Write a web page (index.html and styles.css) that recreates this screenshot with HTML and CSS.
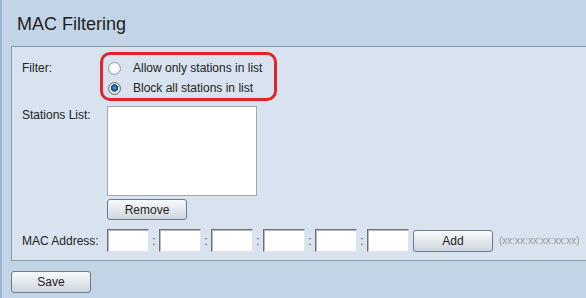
FILE: index.html
```html
<!DOCTYPE html>
<html lang="en">
<head>
  <meta charset="UTF-8">
  <title>MAC Filtering</title>
  <link rel="stylesheet" href="styles.css">
</head>
<body>

  <!-- Page Title -->
  <header class="page-header">
    <h1>MAC Filtering</h1>
  </header>

  <!-- Settings Panel -->
  <section class="panel">
    <div class="row">
      <label class="field-label filter-label">Filter:</label>
      <div class="filter-group">
        <label class="radio-row">
          <input type="radio" name="filter"> Allow only stations in list
        </label>
        <label class="radio-row">
          <input type="radio" name="filter" checked> Block all stations in list
        </label>
      </div>
    </div>

    <div class="row stations-row">
      <label class="field-label">Stations List:</label>
      <div class="stations">
        <div class="listbox"></div>
        <button class="btn remove-button">Remove</button>
      </div>
    </div>

    <div class="row mac-row">
      <label class="field-label">MAC Address:</label>
      <div class="mac-fields">
        <input type="text" class="mac-input">
        <span class="colon">:</span>
        <input type="text" class="mac-input">
        <span class="colon">:</span>
        <input type="text" class="mac-input">
        <span class="colon">:</span>
        <input type="text" class="mac-input">
        <span class="colon">:</span>
        <input type="text" class="mac-input">
        <span class="colon">:</span>
        <input type="text" class="mac-input">
      </div>
      <button class="btn add-button">Add</button>
      <span class="hint">(xx:xx:xx:xx:xx:xx)</span>
    </div>
  </section>

  <footer class="page-footer">
    <button class="btn save-button">Save</button>
  </footer>

</body>
</html>
```

FILE: styles.css
```css
  /* Global Styles */
  * {
    margin: 0;
    padding: 0;
    box-sizing: border-box;
    font-family: 'Liberation Sans', Arial, sans-serif;
  }

  body {
    height: 100vh;
    overflow: hidden;
    font-size: 12px;
    color: #222;
    background-color: #c2d4e6;
    border-left: 2px solid #97b4d6;
  }

  /* Header */
  .page-header {
    height: 46px;
    padding: 14px 0 0 15px;
  }

  .page-header h1 {
    font-size: 18px;
    font-weight: normal;
    line-height: 21px;
    color: #1e1e1e;
  }

  /* Panel */
  .panel {
    margin-left: 9px;
    padding: 5px 0 8px 10px;
    background-color: #d8e3ef;
    border: 1px solid #8b9cae;
    border-right: none;
  }

  .row {
    display: flex;
    align-items: flex-start;
  }

  .field-label {
    width: 85px;
    flex-shrink: 0;
    line-height: 14px;
  }

  .filter-label {
    padding-top: 9px;
  }

  /* Radio group with highlight */
  .filter-group {
    margin-left: -7px;
    width: 177px;
    padding: 3px 0 0 5px;
    border: 3px solid #e3222e;
    border-radius: 10px;
  }

  .radio-row {
    display: flex;
    align-items: center;
    height: 20px;
    gap: 12px;
  }

  .radio-row input {
    appearance: none;
    width: 13px;
    height: 13px;
    border-radius: 50%;
    border: 1px solid #9a9c9e;
    background: radial-gradient(circle at 50% 40%, #ffffff 30%, #dcdcdc 100%);
  }

  .radio-row input:checked {
    border-color: #5d6c7a;
    background: radial-gradient(circle at 50% 45%, #5fa3dc 0, #1f5f99 30%, #133f66 42%, #e8ecf0 48%, #c9ced3 100%);
  }

  /* Stations list */
  .stations-row {
    margin-top: 5px;
  }

  .stations-row .field-label {
    padding-top: 2px;
  }

  .stations {
    display: flex;
    flex-direction: column;
    align-items: flex-start;
    gap: 3px;
  }

  .listbox {
    width: 150px;
    height: 90px;
    background-color: #fff;
    border: 1px solid #a3a6aa;
  }

  /* Buttons */
  .btn {
    width: 80px;
    height: 22px;
    font-size: 12px;
    color: #1e1e1e;
    border: 1px solid #6c7c8d;
    border-radius: 3px;
    background: linear-gradient(#f8f9fa, #e6eaee 45%, #cdd5dd);
    cursor: pointer;
  }

  .btn:hover {
    background: linear-gradient(#ffffff, #d9e2ea);
  }

  .remove-button {
    width: 80px;
    height: 21px;
  }

  /* MAC address row */
  .mac-row {
    margin-top: 9px;
    align-items: center;
  }

  .mac-fields {
    display: flex;
    align-items: center;
  }

  .mac-input {
    width: 42px;
    height: 23px;
    background-color: #fff;
    border: 1px solid;
    border-color: #6f6f6f #e2e2e2 #e2e2e2 #6f6f6f;
    box-shadow: inset 1px 1px 0 #b9b9b9;
    outline: none;
  }

  .colon {
    width: 10px;
    text-align: center;
    color: #555;
  }

  .add-button {
    margin-left: 4px;
  }

  .hint {
    margin-left: 6px;
    font-size: 10px;
    color: #9a9a9a;
  }

  /* Footer */
  .page-footer {
    padding: 10px 0 0 9px;
  }
```
